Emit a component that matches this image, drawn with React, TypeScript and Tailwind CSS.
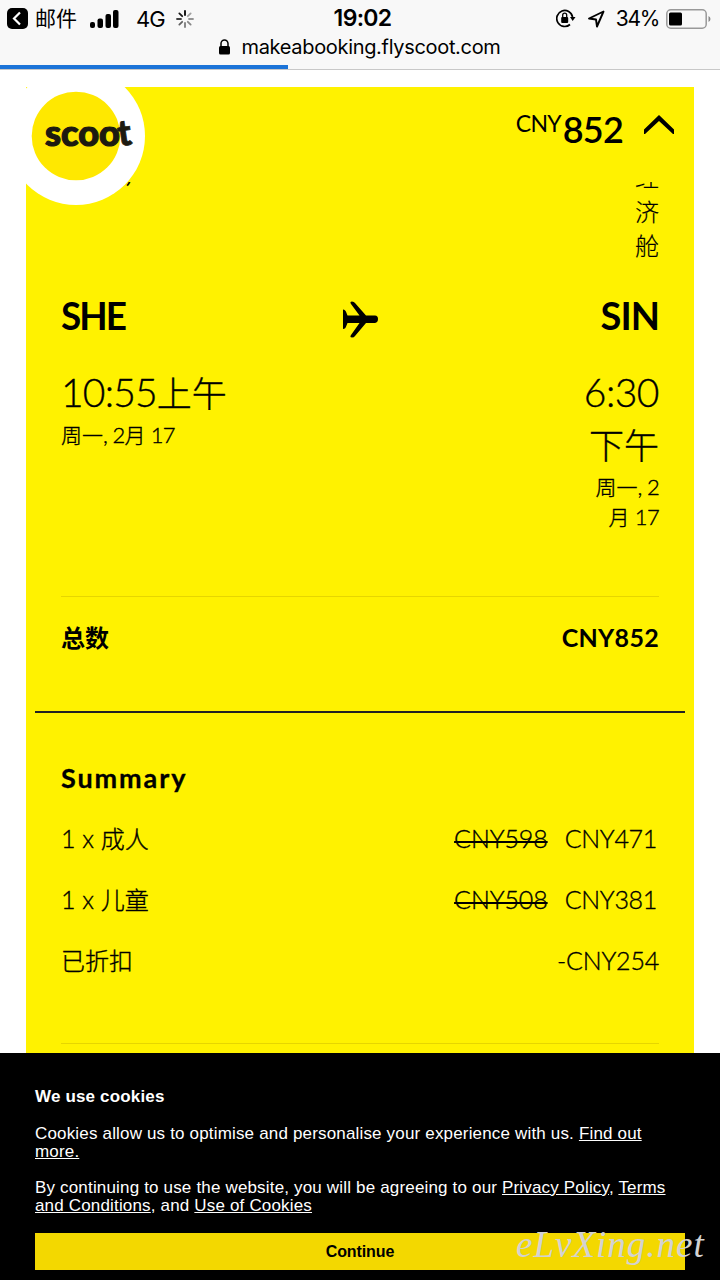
import type { ReactNode } from 'react';

const fares = [
  { count: '1 x ', label: '成人', before: 'CNY598', price: 'CNY471' },
  { count: '1 x ', label: '儿童', before: 'CNY508', price: 'CNY381' },
  { count: '', label: '已折扣', before: '', price: '-CNY254' }
];

const spokes = [1, 0.35, 0.4, 0.45, 0.5, 0.6, 0.75, 0.9];

function StatusBar() {
  return (
    <header className="relative z-20 h-[70px] border-b border-[#c8c8c8] bg-[#f8f8f8] font-['Inter','Noto_Sans_CJK_SC',sans-serif] text-black">
      <div className="flex h-[37px] items-center justify-between pl-[7px] pr-[9px]">
        <div className="flex w-[300px] items-center">
          <svg width="21" height="21" viewBox="0 0 21 21">
            <rect width="21" height="21" rx="5" fill="#000" />
            <path d="M13 4.500 7 10.500l6 6" fill="none" stroke="#fff" strokeWidth="2.2" />
          </svg>
          <span className="ml-[7px] text-[21px] leading-none">邮件</span>
          <svg className="ml-[13px]" width="30" height="18" viewBox="0 0 30 18">
            <rect x="0" y="12" width="5" height="6" rx="2" />
            <rect x="7.500" y="8.500" width="5.500" height="9.500" rx="2" />
            <rect x="15.500" y="4" width="5.500" height="14" rx="2" />
            <rect x="23" y="0" width="5.500" height="18" rx="2" />
          </svg>
          <span className="ml-[16px] text-[22px] leading-none tracking-[-1px]">4G</span>
          <svg className="ml-[11px]" width="18" height="18" viewBox="-9 -9 18 18">
            {spokes.map((opacity, i) => (
              <path key={i} d="M0-4V-8" stroke="#000" strokeWidth="1.8" strokeLinecap="round" opacity={opacity} transform={`rotate(${i * 45})`} />
            ))}
          </svg>
        </div>
        <span className="ml-[7px] text-[23px] leading-none font-semibold tracking-[-0.7px]">19:02</span>
        <div className="flex w-[300px] items-center justify-end">
          <svg width="20" height="19" viewBox="0 0 20 19" fill="none" stroke="#000" strokeWidth="1.7">
            <path d="M16.600 8A8 8 0 1 0 14 15.500" />
            <path d="M14 8h5.500L16.700 12Z" fill="#000" stroke="none" />
            <rect x="5.200" y="8" width="7" height="6" rx="1" fill="#000" stroke="none" />
            <path d="M6.700 8V6.200a2 2 0 0 1 4 0V8" strokeWidth="1.3" />
          </svg>
          <svg className="ml-[11px]" width="18" height="18" viewBox="0 0 18 18">
            <path d="M16.500 1.500 2 8.500 9 9.500 10 16.500Z" fill="none" stroke="#000" strokeWidth="1.9" strokeLinejoin="round" />
          </svg>
          <span className="ml-[11px] text-[21px] leading-none tracking-[-1.300px]">34%</span>
          <svg className="ml-[7px]" width="45" height="20" viewBox="0 0 45 20">
            <rect x="0.800" y="0.800" width="39.400" height="18.400" rx="4" fill="none" stroke="#999" strokeWidth="1.500" />
            <rect x="3" y="3.500" width="13" height="13" rx="1.500" />
            <path d="M42.500 7v6q2-1 2-3t-2-3" fill="#888" />
          </svg>
        </div>
      </div>
      <div className="flex h-[20px] items-center justify-center gap-[11px]">
        <svg width="11" height="16" viewBox="0 0 11 16">
          <rect y="7" width="11" height="8.500" rx="1.500" />
          <path d="M2 8V4.500a3.500 3.500 0 0 1 7 0V8" fill="none" stroke="#000" strokeWidth="1.500" />
        </svg>
        <span className="text-[20px] leading-none tracking-[-0.32px]">makeabooking.flyscoot.com</span>
      </div>
      <div className="absolute top-[65px] left-0 h-[4px] w-[288px] bg-[#1c74d8]" />
    </header>
  );
}

function Logo() {
  return (
    <svg className="absolute top-[-20px] left-[-19px] z-10" width="140" height="140" viewBox="0 0 140 140">
      <circle cx="69" cy="69" r="69" fill="#fff" />
      <circle cx="69" cy="69" r="44.300" fill="#ffe800" />
      <g fill="#1d1a10" stroke="#1d1a10" fontFamily="Lato, sans-serif" fontWeight="900" fontSize="36">
        <text x="38" y="78.500" textLength="75" lengthAdjust="spacingAndGlyphs" strokeWidth="1.2">scoo</text>
        <text x="111" y="78.500" transform="rotate(-8 117 70)" strokeWidth="0.8">t</text>
      </g>
    </svg>
  );
}

function Cjk({ className = '', children }: { className?: string; children: ReactNode }) {
  return <span className={`font-['Noto_Sans_CJK_SC',sans-serif] font-light tracking-normal ${className}`}>{children}</span>;
}

function CookieBar() {
  return (
    <section className="relative h-[227px] bg-black px-[35px] pt-[35px] font-['Liberation_Sans',sans-serif] text-[17px] leading-[18px] tracking-[0.17px] whitespace-nowrap text-white">
      <h2 className="font-bold">We use cookies</h2>
      <p className="mt-[19px]">
        Cookies allow us to optimise and personalise your experience with us. <a className="underline">Find out<br />more.</a>
      </p>
      <p className="mt-[18px]">
        By continuing to use the website, you will be agreeing to our <a className="underline">Privacy Policy</a>, <a className="underline">Terms<br />and Conditions</a>, and <a className="underline">Use of Cookies</a>
      </p>
      <button className="mt-[18px] block h-[37px] w-full bg-[#f3d800] text-[16px] font-bold tracking-[-0.1px] text-black">Continue</button>
      <span className="absolute top-[170px] left-[516px] font-['Liberation_Serif',serif] text-[37px] leading-[44px] tracking-[1px] text-[#d2d2d2] italic">eLvXing.net</span>
    </section>
  );
}

export default function App() {
  return (
    <div className="h-[1280px] w-[720px] overflow-hidden bg-white">
      <StatusBar />
      <main className="h-[983px] px-[26px] pt-[17px]">
        <div className="relative h-full bg-[#fff200] px-[9px] font-['Lato','Noto_Sans_CJK_SC',sans-serif] text-black">
          <Logo />
          <div className="flex h-[95px] items-start justify-end pt-[20px] pr-[11px]">
            <span className="mt-[2px] text-[23px] leading-[28px] tracking-[-0.8px]">CNY</span>
            <span className="ml-[2px] text-[36px] leading-[44px] font-semibold tracking-[-0.8px]">852</span>
            <svg className="mt-[7px] ml-[21px]" width="30" height="22" viewBox="0 0 30 22">
              <path d="M0 20v-4.500L15 1l15 14.500V20h-1L15 7 1 20Z" />
            </svg>
          </div>
          <div className="flex h-[83px] justify-between overflow-hidden pr-[26px] pl-[91px]">
            <span className="mt-[-25px] text-[28px] leading-[28px] font-bold italic">,</span>
            <Cjk className="mt-[-23px] w-[24px] text-[24px] leading-[34.5px] [-webkit-text-stroke:0.2px_black]">经济舱</Cjk>
          </div>
          <div className="grid h-[100px] grid-cols-3 items-center px-[26px] text-[38px] leading-none font-bold">
            <span className="origin-left scale-x-[0.97] tracking-[-2px]">SHE</span>
            <svg className="mt-[8px] ml-[1px] justify-self-center" width="35" height="37" viewBox="0 0 35 37">
              <path d="M0 8.500q2.500 0 3.500 3.500l1 2.500h12L8 3q-1.500-2.500 1-2.500 2 0 3 1.500l11 12.500h9q3 0 3 3.500T32 22h-9L12 35q-1 1.500-3 1.500-2.500 0-1-2.500l8.500-12h-12l-1 2.500Q2.500 28 0 28Z" />
            </svg>
            <span className="text-right tracking-[-1px]">SIN</span>
          </div>
          <div className="flex h-[231px] justify-between px-[26px] pt-px font-light [-webkit-text-stroke:0.35px_black]">
            <div>
              <p className="text-[39px] leading-[52px] tracking-[-0.8px]">10:55<Cjk className="text-[35px] leading-none">上午</Cjk></p>
              <p className="mt-[2px] text-[22px] leading-[30px] tracking-[-0.7px]"><Cjk className="text-[21px] leading-none">周一</Cjk>, 2<Cjk className="text-[21px] leading-none">月</Cjk> 17</p>
            </div>
            <div className="w-[76px] text-right">
              <p className="text-[39px] leading-[52px] tracking-[-0.5px]">6:30<br /><Cjk className="text-[35px] leading-none">下午</Cjk></p>
              <p className="mt-[2px] text-[22px] leading-[30px] tracking-[-0.7px] whitespace-nowrap"><Cjk className="text-[21px] leading-none">周一</Cjk>, 2<br /><Cjk className="text-[21px] leading-none">月</Cjk> 17</p>
            </div>
          </div>
          <div className="mx-[26px] border-t border-[#e6d600]" />
          <div className="flex h-[82px] items-center justify-between px-[26px] text-[25px] font-bold">
            <span className="text-[24px]">总数</span>
            <span className="tracking-[0.3px]">CNY852</span>
          </div>
          <div className="mt-[32px] border-t-2 border-[#222]" />
          <h2 className="mt-[48px] px-[26px] text-[27px] leading-[34px] font-bold tracking-[1.9px] [-webkit-text-stroke:0.3px_black]">Summary</h2>
          <div className="mt-[13px] px-[26px] text-[25px] font-light [-webkit-text-stroke:0.35px_black]">
            {fares.map((fare) => (
              <div key={fare.label} className="flex h-[61px] items-center justify-between">
                <span>{fare.count}<Cjk className="text-[24px] leading-none">{fare.label}</Cjk></span>
                <span className="flex gap-[17px] tracking-[-0.1px]">
                  {fare.before && <s className="underline decoration-[1.5px] underline-offset-[-7px] [text-decoration-skip-ink:none]">{fare.before}</s>}
                  <span className={fare.before ? 'mr-[2px] tracking-[-0.3px]' : 'tracking-[-0.2px]'}>{fare.price}</span>
                </span>
              </div>
            ))}
          </div>
          <div className="mx-[26px] mt-[52px] border-t border-[#e6d600]" />
        </div>
      </main>
      <CookieBar />
    </div>
  );
}
